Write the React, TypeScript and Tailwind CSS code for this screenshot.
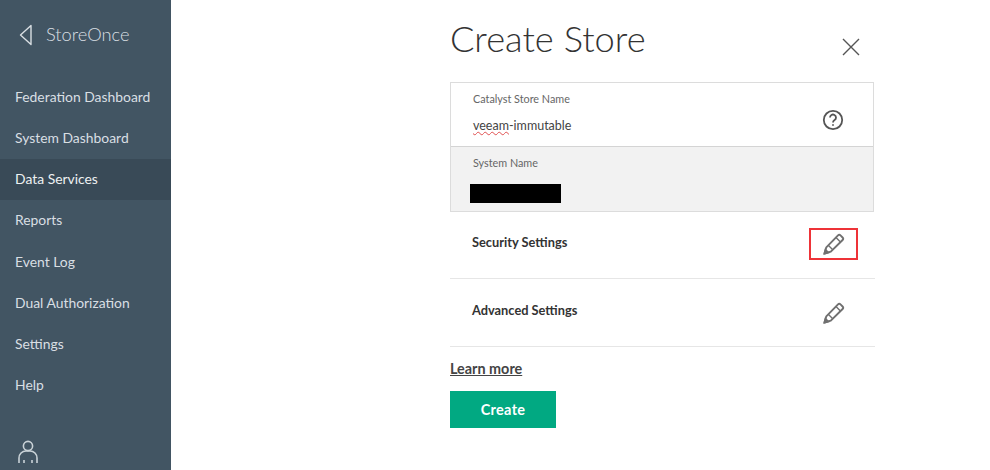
const navItems = [
  'Federation Dashboard',
  'System Dashboard',
  'Data Services',
  'Reports',
  'Event Log',
  'Dual Authorization',
  'Settings',
  'Help',
];

function Pencil() {
  return (
    <svg width="22" height="22" viewBox="0 0 22 22" fill="none" stroke="#707070" strokeWidth="1.9">
      <path d="M1.5 20.5l1.8-6.2L15 2.4a1.8 1.8 0 0 1 2.5 0l2.1 2.1a1.8 1.8 0 0 1 0 2.5L7.8 18.7z" strokeLinejoin="round" />
      <path d="M13 4.6l4.4 4.4M5.5 12.4l4 4" strokeWidth="1.4" />
      <path d="M1.5 20.5l3.6-1-2.6-2.6z" fill="#707070" />
    </svg>
  );
}

export default function App() {
  return (
    <div className="flex h-[470px] w-[990px] overflow-hidden bg-white font-['Lato',sans-serif]">
      <aside className="flex w-[171px] shrink-0 flex-col bg-[#425563] text-[#d9dfe3]">
        <div className="flex h-[76px] items-center pb-[7px] pl-[19px]">
          <svg width="13" height="22" viewBox="0 0 13 22" fill="none" stroke="#d9dfe3" strokeWidth="1.4">
            <path d="M12 1.5L1.5 11 12 20.5z" strokeLinejoin="round" />
          </svg>
          <span className="ml-[14px] text-[18.3px] font-light">StoreOnce</span>
        </div>
        <nav className="flex flex-col pt-[0.5px]">
          {navItems.map((item) => (
            <div
              key={item}
              className={`flex h-[41.25px] items-center pl-[15px] text-[13.9px] ${
                item === 'Data Services' ? 'bg-[#394a57] text-[#eef1f2]' : ''
              }`}
            >
              {item}
            </div>
          ))}
        </nav>
        <div className="mt-[33px] pl-[17px]">
          <svg width="22" height="24" viewBox="0 0 22 24" fill="none" stroke="#c9d2d7" strokeWidth="1.6">
            <circle cx="11" cy="6" r="4.6" />
            <path d="M2 23v-5a7 7 0 0 1 7-7h4a7 7 0 0 1 7 7v5M7 23v-3M15 23v-3" />
          </svg>
        </div>
      </aside>

      <main className="ml-[279px] w-[425px] shrink-0">
        <div className="flex h-[82px] justify-between">
          <h1 className="pt-[12px] text-[36.3px] leading-[52px] font-light text-[#333]">Create Store</h1>
          <svg className="mt-[37px] mr-[14px]" width="20" height="20" viewBox="0 0 20 20" stroke="#555" strokeWidth="1.4">
            <path d="M2 2l16 16M18 2L2 18" />
          </svg>
        </div>

        <div className="mr-[1px] border border-[#dcdcdc]">
          <div className="flex h-[63px] items-center justify-between pr-[29px] pl-[22px]">
            <div className="-mt-[3px]">
              <div className="text-[10.8px] leading-[14px] text-[#666]">Catalyst Store Name</div>
              <div className="mt-[12px] text-[12.5px] leading-[16px] text-[#444]">
                <span className="underline decoration-[#e05050] decoration-wavy decoration-1">veeam</span>-immutable
              </div>
            </div>
            <svg width="22" height="22" viewBox="0 0 22 22" fill="none" stroke="#555" strokeWidth="1.8" className="mt-[10px]">
              <circle cx="11" cy="11" r="9.2" />
              <path d="M8 8.6a3 3 0 1 1 4.6 2.5c-1 .7-1.6 1.2-1.6 2.4" />
              <path d="M11 15.2v1.6" />
            </svg>
          </div>
          <div className="h-[65px] border-t border-[#d4d4d4] bg-[#f2f2f2] pt-[9px] pl-[22px]">
            <div className="text-[10.8px] leading-[14px] text-[#666]">System Name</div>
            <div className="mt-[14px] -ml-[3px] h-[19px] w-[91px] bg-black" />
          </div>
        </div>

        <div className="flex h-[67px] items-center justify-between border-b border-[#e6e6e6] pr-[17px] pl-[22px]">
          <span className="pb-[4px] text-[12.8px] font-bold text-[#333]">Security Settings</span>
          <div className="mb-[3px] flex h-[32px] w-[49px] items-center justify-center border-2 border-[#ee3338]">
            <Pencil />
          </div>
        </div>
        <div className="flex h-[68px] items-center justify-between border-b border-[#e6e6e6] pr-[30px] pl-[22px]">
          <span className="pb-[3px] text-[12.8px] font-bold text-[#333]">Advanced Settings</span>
          <Pencil />
        </div>

        <div className="pt-[12px] text-[14.4px] leading-[20px] font-bold text-[#444] underline">Learn more</div>
        <button className="mt-[12px] h-[37px] w-[106px] bg-[#01a982] text-[14.5px] font-bold tracking-[0.3px] text-white">Create</button>
      </main>
    </div>
  );
}
